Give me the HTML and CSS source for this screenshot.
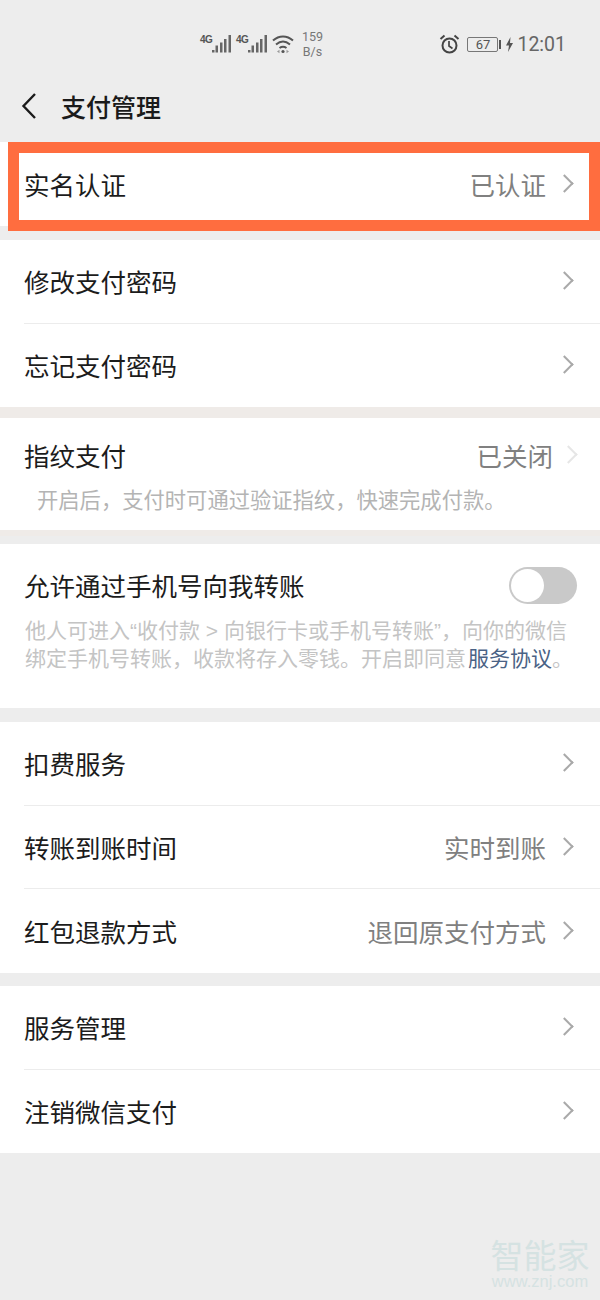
FILE: index.html
```html
<!DOCTYPE html>
<html lang="zh-CN">
<head>
    <meta charset="UTF-8">
    <title>支付管理</title>
    <link rel="stylesheet" href="styles.css">
</head>
<body>
    <div class="main">
        <div class="status">
            <span class="net">4G</span>
            <svg class="signal" width="21" height="20" viewBox="0 0 21 20"><path d="M1 16h2.500v2.500H1zM4.500 11.500H7v7H4.500zM9 8.500h2.500v10H9zM13 5h2.500v13.500H13zM17.500 1H20v17.500h-2.500z" fill="#666"/></svg>
            <span class="net">4G</span>
            <svg class="signal" width="21" height="20" viewBox="0 0 21 20"><path d="M1 16h2.500v2.500H1zM4.500 11.500H7v7H4.500zM9 8.500h2.500v10H9zM13 5h2.500v13.500H13zM17.500 1H20v17.500h-2.500z" fill="#666"/></svg>
            <svg class="wifi" width="22" height="20" viewBox="0 0 22 20" fill="none" stroke="#555" stroke-width="2"><path d="M1 6.500c6-5.500 14-5.500 20 0M4 10.500c4.500-3.800 9.500-3.800 14 0M7.500 14c2.200-1.600 4.800-1.600 7 0"/><circle cx="11" cy="17.500" r="1.600" fill="#555" stroke="none"/><path d="M7.500 15.800l-2.500 1.700 2.500 1.700zM14.500 15.800l2.500 1.700-2.500 1.700z" fill="#999" stroke="none"/></svg>
            <div class="speed">159<br>B/s</div>
            <div class="status-right">
                <svg width="21" height="20" viewBox="0 0 21 20" fill="none" stroke="#444" stroke-width="2"><circle cx="10.500" cy="11.500" r="7"/><path d="M10 7v5l3.500 2.500" stroke-width="1.700"/><path d="M1.500 5l4-3.500M19.500 5l-4-3.500"/></svg>
                <div class="battery">67</div>
                <div class="battery-tip"></div>
                <svg width="9" height="15" viewBox="0 0 9 15"><path d="M5.500 0L1 8.500h3L3 15l5-9H5z" fill="#555"/></svg>
                <span class="time">12:01</span>
            </div>
        </div>

        <div class="header">
            <svg width="18" height="28" viewBox="0 0 18 28" fill="none" stroke="#1a1a1a" stroke-width="2.400"><path d="M15 2L3.500 14 15 26"/></svg>
            <h1>支付管理</h1>
        </div>

        <div class="group first">
            <div class="item"><span class="name">实名认证</span><span class="value">已认证</span><span class="arrow"></span></div>
        </div>
        <div class="group second">
            <div class="item line"><span class="name">修改支付密码</span><span class="arrow"></span></div>
            <div class="item"><span class="name">忘记支付密码</span><span class="arrow"></span></div>
        </div>
        <div class="group finger">
            <div class="item short"><span class="name">指纹支付</span><span class="value">已关闭</span><span class="arrow pale"></span></div>
            <p class="tip">开启后，支付时可通过验证指纹，快速完成付款。</p>
        </div>
        <div class="group allow">
            <div class="item short"><span class="name">允许通过手机号向我转账</span><span class="switch"></span></div>
            <p class="note">他人可进入“收付款 &gt; 向银行卡或手机号转账”，向你的微信绑定手机号转账，收款将存入零钱。开启即同意<a class="link">服务协议</a>。</p>
        </div>
        <div class="group third">
            <div class="item line"><span class="name">扣费服务</span><span class="arrow"></span></div>
            <div class="item line"><span class="name">转账到账时间</span><span class="value">实时到账</span><span class="arrow"></span></div>
            <div class="item"><span class="name">红包退款方式</span><span class="value">退回原支付方式</span><span class="arrow"></span></div>
        </div>
        <div class="group fourth">
            <div class="item line"><span class="name">服务管理</span><span class="arrow"></span></div>
            <div class="item"><span class="name">注销微信支付</span><span class="arrow"></span></div>
        </div>

        <!-- 标注框 -->
        <div class="mark"></div>

        <div class="water">
            <div class="water-logo">智能家</div>
            <div class="water-url">www.znj.com</div>
        </div>
    </div>
</body>
</html>
```
FILE: styles.css
```css
* {
    margin: 0;
    padding: 0;
    box-sizing: border-box;
}

body {
    background-color: #ededed;
    font-family: "Noto Sans CJK SC", "Liberation Sans", sans-serif;
}

.main {
    position: relative;
    width: 600px;
    height: 1300px;
    overflow: hidden;
}

.status {
    height: 72px;
    display: flex;
    align-items: center;
    padding: 16px 34px 0 200px;
    color: #555;
}

.net {
    font-family: "Liberation Sans", sans-serif;
    font-size: 10px;
    font-weight: bold;
    letter-spacing: -0.5px;
    margin-top: -10px;
    width: 11px;
}

.signal {
    margin-right: 4px;
}

.speed {
    font-family: Roboto, sans-serif;
    font-size: 12.500px;
    line-height: 15px;
    color: #777;
    margin-left: 8px;
    text-align: center;
}

.status-right {
    margin-left: auto;
    display: flex;
    align-items: center;
}

.battery {
    width: 31px;
    height: 15px;
    border: 1px solid #777;
    border-radius: 2px;
    margin-left: 7px;
    font-family: Roboto, sans-serif;
    font-size: 13px;
    line-height: 13px;
    text-align: center;
    color: #555;
}

.battery-tip {
    width: 2px;
    height: 9px;
    background-color: #555;
    margin: 0 4px 0 1px;
}

.time {
    font-family: Roboto, sans-serif;
    font-size: 19.500px;
    color: #666;
    margin-left: 3px;
}

.header {
    height: 70px;
    display: flex;
    align-items: center;
    padding: 0 0 2px 20px;
}

.header h1 {
    font-size: 25px;
    font-weight: 500;
    color: #1a1a1a;
    margin-left: 23px;
}

.group {
    background-color: #fff;
}

.first {
    height: 84px;
}

.second {
    margin-top: 14px;
}

.finger {
    margin-top: 11px;
    height: 112px;
    box-shadow: 0 -11px 0 #efebe8, 0 6px 0 #efebe8;
}

.allow {
    margin-top: 14px;
    height: 164px;
}

.third {
    margin-top: 14px;
}

.fourth {
    margin-top: 13.500px;
}

.item {
    height: 83.500px;
    display: flex;
    align-items: center;
    margin-left: 24px;
    padding-right: 26px;
    padding-bottom: 1px;
    font-size: 25.500px;
}

.line {
    border-bottom: 1px solid #ececec;
}

.finger .item,
.allow .item {
    height: 74px;
}

.allow .item {
    height: 82px;
}

.name {
    color: #1c1c1c;
    flex: 1;
}

.value {
    color: #808080;
    margin-right: 12px;
}

.arrow {
    width: 13px;
    height: 13px;
    border-top: 2px solid #a9a9a9;
    border-right: 2px solid #a9a9a9;
    transform: rotate(45deg);
    margin-right: 3px;
}

.finger .item {
    padding-right: 22px;
}

.finger .value {
    margin-right: 9px;
}

.arrow.pale {
    border-color: #e6e6e6;
}

.tip {
    font-size: 21.300px;
    line-height: 30px;
    color: #b4b4b4;
    padding-left: 37px;
    margin-top: -8px;
}

.note {
    font-family: "Liberation Sans", "Noto Sans CJK SC", sans-serif;
    font-size: 21px;
    line-height: 28px;
    color: #c4c4c4;
    padding: 0 25px;
    margin-top: -9px;
}

.link {
    color: #4a6285;
    margin-left: 2px;
}

.switch {
    width: 68px;
    height: 37px;
    border-radius: 19px;
    background-color: #c9c9c9;
    position: relative;
    margin-right: -3px;
    margin-top: 2px;
}

.switch::before {
    content: "";
    position: absolute;
    left: 2px;
    top: 2px;
    width: 33px;
    height: 33px;
    border-radius: 50%;
    background-color: #fff;
}

.mark {
    position: absolute;
    left: 8px;
    top: 142px;
    width: 592px;
    height: 89px;
    border: 11px solid #ff6d3f;
}

.water {
    position: absolute;
    left: 490px;
    top: 1235px;
    width: 100px;
    text-align: center;
}

.water-logo {
    font-size: 33px;
    line-height: 38px;
    color: #d5e2e2;
}

.water-url {
    font-family: "Liberation Sans", sans-serif;
    font-size: 16.500px;
    line-height: 20px;
    margin-top: -2px;
    color: #d5e2e2;
}
```
